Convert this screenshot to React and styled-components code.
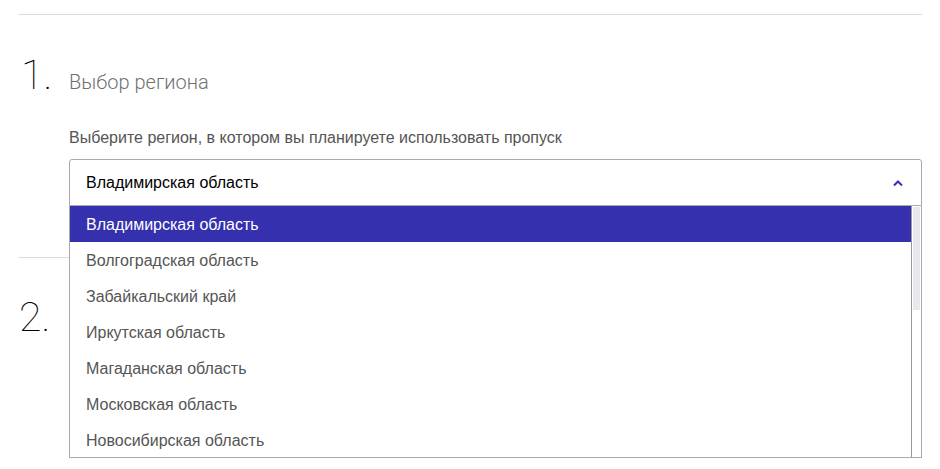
import styled, { createGlobalStyle } from "styled-components";

const regions = [
  "Владимирская область",
  "Волгоградская область",
  "Забайкальский край",
  "Иркутская область",
  "Магаданская область",
  "Московская область",
  "Новосибирская область",
];

// the list shows 7 of 17 regions, so the thumb covers about 40% of the track
const thumbShare = 7 / 17;

const App = () => {
  const selected = regions[0];

  return (
    <Page>
      <GlobalStyle />
      <Step>
        <StepHead>
          <StepNumber>1.</StepNumber>
          <StepTitle>Выбор региона</StepTitle>
        </StepHead>
        <StepBody>
          <Label>Выберите регион, в котором вы планируете использовать пропуск</Label>
          <SelectWrap>
            <SelectBox>
              <span>{selected}</span>
              <svg width="12" height="8" viewBox="0 0 12 8">
                <path d="M2 6.5 L6 2.5 L10 6.5" fill="none" stroke="#3a31b8" strokeWidth="2" />
              </svg>
            </SelectBox>
            <Menu>
              <Options>
                {regions.map((r) => (
                  <Option key={r} $active={r === selected}>
                    {r}
                  </Option>
                ))}
              </Options>
              <ScrollTrack>
                <ScrollThumb style={{ height: `${thumbShare * 100}%` }} />
              </ScrollTrack>
            </Menu>
          </SelectWrap>
        </StepBody>
      </Step>
      <Step $second>
        <StepHead>
          <StepNumber $second>2.</StepNumber>
        </StepHead>
      </Step>
    </Page>
  );
};

const GlobalStyle = createGlobalStyle`
  body {
    margin: 0;
    background: #fff;
    font-family: "Liberation Sans", Arial, sans-serif;
  }
`;

const Page = styled.div`
  padding: 14px 18px 0 18px;
  width: 904px;
  min-height: 100vh;
  box-sizing: content-box;
  overflow: hidden;
`;

const Step = styled.section`
  border-top: 1px solid #dcdcdc;
  padding-top: ${(p) => (p.$second ? "34px" : "35px")};
  padding-bottom: 51px;
`;

const StepHead = styled.div`
  display: flex;
  align-items: baseline;
  height: 50px;
`;

const StepNumber = styled.div`
  width: 51px;
  font-family: Roboto, sans-serif;
  font-weight: 100;
  font-size: 41px;
  line-height: 50px;
  color: #000;
  padding-left: ${(p) => (p.$second ? "1px" : "3px")};
  box-sizing: border-box;
`;

const StepTitle = styled.h2`
  margin: 0;
  font-family: Roboto, sans-serif;
  font-weight: 300;
  font-size: 20px;
  color: #707070;
`;

const StepBody = styled.div`
  padding-left: 51px;
  padding-top: 29px;
`;

const Label = styled.div`
  font-size: 16px;
  color: #555;
  line-height: 18px;
  margin-bottom: 12px;
`;

const SelectWrap = styled.div`
  position: relative;
`;

const SelectBox = styled.div`
  height: 45px;
  border: 1px solid #aaa;
  border-radius: 3px 3px 0 0;
  display: flex;
  align-items: center;
  justify-content: space-between;
  padding: 0 17px 0 16px;
  font-size: 16px;
  color: #000;
`;

const Menu = styled.div`
  position: absolute;
  top: 47px;
  left: 0;
  right: 0;
  display: flex;
  background: #fff;
  border: 1px solid #aaa;
  border-top: none;
  height: 251px;
  overflow: hidden;
  z-index: 2;
`;

const Options = styled.ul`
  flex: 1;
  margin: 0;
  padding: 0;
  list-style: none;
`;

const Option = styled.li`
  height: 36px;
  line-height: 37px;
  padding-left: 16px;
  font-size: 16px;
  color: ${(p) => (p.$active ? "#fff" : "#555")};
  background: ${(p) => (p.$active ? "#3430ae" : "transparent")};
`;

const ScrollTrack = styled.div`
  width: 10px;
  border-left: 1px solid #999;
  padding: 1px 1px 0 1px;
  box-sizing: border-box;
`;

const ScrollThumb = styled.div`
  background: #e8e8ec;
`;

export default App;
